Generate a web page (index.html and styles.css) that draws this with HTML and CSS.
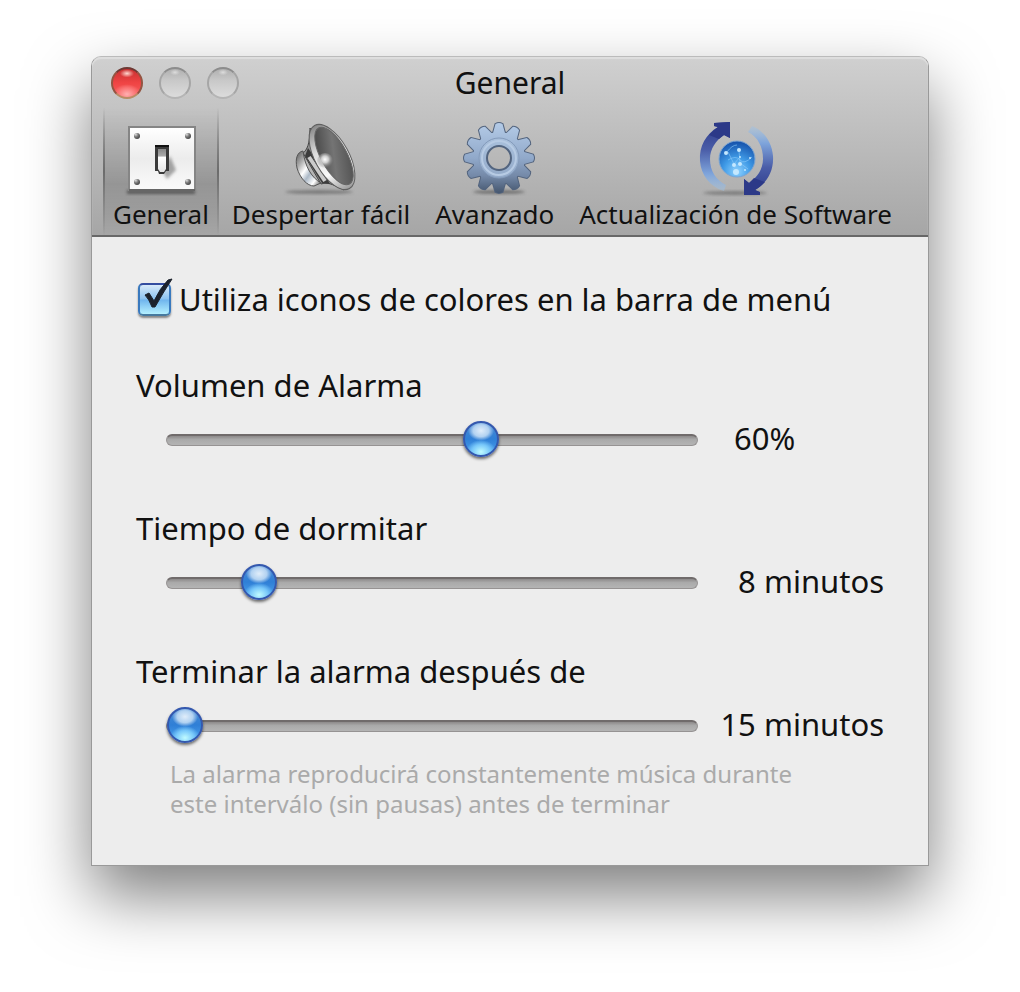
FILE: index.html
```html
<!DOCTYPE html>
<html lang="es">
<head>
<meta charset="utf-8">
<title>General</title>
<link rel="stylesheet" href="styles.css">
</head>
<body>
<main class="window">
  <header class="chrome">
    <div class="titlebar">
      <div class="lights">
        <button class="light light-close" aria-label="Cerrar"></button>
        <button class="light" aria-label="Minimizar"></button>
        <button class="light" aria-label="Ampliar"></button>
      </div>
      <h1 class="title">General</h1>
    </div>
    <nav class="toolbar">
      <button class="tool tool-active" aria-current="page">
        <svg class="tool-icon" viewBox="0 0 76 76" aria-hidden="true">
          <defs>
            <linearGradient id="plate" x1="0" y1="0" x2="0" y2="1"><stop offset="0" stop-color="#fff"/><stop offset=".5" stop-color="#ececec"/><stop offset="1" stop-color="#fafafa"/></linearGradient>
            <linearGradient id="lever" x1="0" y1="0" x2="0" y2="1"><stop offset="0" stop-color="#888"/><stop offset=".3" stop-color="#aaa"/><stop offset=".36" stop-color="#fff"/><stop offset="1" stop-color="#e4e4e4"/></linearGradient>
            <radialGradient id="screw" cx=".3" cy=".25" r=".8"><stop offset="0" stop-color="#ddd"/><stop offset=".5" stop-color="#777"/><stop offset="1" stop-color="#444"/></radialGradient>
            <filter id="soft" x="-50%" y="-50%" width="200%" height="200%"><feGaussianBlur stdDeviation="1.5"/></filter>
          </defs>
          <path d="M4 70h68v4H4z" fill="#333" opacity=".6" filter="url(#soft)"/>
          <rect x="5" y="6" width="68" height="65" fill="#858585"/>
          <rect x="7" y="8" width="64" height="61" fill="url(#plate)"/>
          <path d="M6 70h66" stroke="#666" stroke-width="2"/>
          <circle cx="14" cy="16" r="3" fill="url(#screw)"/><circle cx="65" cy="16" r="3" fill="url(#screw)"/>
          <circle cx="14" cy="62" r="3" fill="url(#screw)"/><circle cx="65" cy="62" r="3" fill="url(#screw)"/>
          <path d="M40 52L47 36L53 50L44 59z" fill="#555" opacity=".5" filter="url(#soft)"/>
          <path d="M32 25h14v26h-3l-2 3h-5l-1-3h-3z" fill="#3a3a3a"/>
          <path d="M32 26h14" stroke="#111" stroke-width="2"/>
          <path d="M35 29h8v20l-2 3h-4l-2-3z" fill="url(#lever)"/>
        </svg>
        <span class="tool-label">General</span>
      </button>
      <button class="tool">
        <svg class="tool-icon" viewBox="0 0 76 76" aria-hidden="true">
          <defs>
            <linearGradient id="cone" x1="0" y1="0" x2="1" y2="1"><stop offset="0" stop-color="#3a3a3a"/><stop offset=".5" stop-color="#747474"/><stop offset="1" stop-color="#484848"/></linearGradient>
            <linearGradient id="rim" x1="0" y1="0" x2="0" y2="1"><stop offset="0" stop-color="#888"/><stop offset=".35" stop-color="#ddd"/><stop offset=".7" stop-color="#fafafa"/><stop offset="1" stop-color="#999"/></linearGradient>
            <linearGradient id="magnet" x1="0" y1="0" x2="1" y2="1"><stop offset="0" stop-color="#555"/><stop offset=".25" stop-color="#aaa"/><stop offset=".45" stop-color="#fff"/><stop offset=".6" stop-color="#acb9c7"/><stop offset=".8" stop-color="#fff"/><stop offset="1" stop-color="#444"/></linearGradient>
            <radialGradient id="dome" cx=".5" cy=".4" r=".55"><stop offset="0" stop-color="#fff"/><stop offset=".4" stop-color="#ccc"/><stop offset="1" stop-color="#777" stop-opacity="0"/></radialGradient>
          </defs>
          <ellipse cx="36" cy="72" rx="34" ry="2" fill="#444" opacity=".5" filter="url(#soft)"/>
          <path d="M27 8C27 24 24 30 20 33L38 64C46 61 54 67 61 70z" fill="#929292" stroke="#444"/>
          <path d="M25 28L22 36L39 63L47 64L38 46z" fill="#3c3c3c"/>
          <path d="M26 37L42 61" stroke="#ccc" stroke-width="4"/>
          <path d="M20 31C14 32 12 39 14 48C17 58 24 66 31 66L38 63C29 58 22 47 20 31z" fill="url(#magnet)" stroke="#555"/>
          <ellipse cx="49" cy="37" rx="17" ry="36" transform="rotate(-29 49 37)" fill="url(#rim)" stroke="#606060"/>
          <ellipse cx="51" cy="36" rx="13" ry="32" transform="rotate(-29 51 36)" fill="url(#cone)" stroke="#666"/>
          <circle cx="42" cy="41" r="8" fill="url(#dome)"/>
        </svg>
        <span class="tool-label">Despertar fácil</span>
      </button>
      <button class="tool">
        <svg class="tool-icon" viewBox="0 0 76 76" aria-hidden="true">
          <defs>
            <linearGradient id="steel" gradientUnits="userSpaceOnUse" x1="0" y1="2" x2="0" y2="74"><stop offset="0" stop-color="#b5cce8"/><stop offset=".5" stop-color="#91a9ca"/><stop offset=".75" stop-color="#7489a8"/><stop offset="1" stop-color="#42536b"/></linearGradient>
            <linearGradient id="ring" x1="0" y1="0" x2="0" y2="1"><stop offset="0" stop-color="#a9c0dc"/><stop offset="1" stop-color="#93aac9"/></linearGradient>
            <mask id="hub"><path d="M0 0h80v80H0z" fill="#fff"/><circle cx="42" cy="38" r="12" fill="#000"/></mask>
            <path id="tooth" d="M36 13L38.500 4Q42 2 45.500 4L48 13z"/>
            <g id="gear">
              <circle cx="42" cy="38" r="26"/>
              <use href="#tooth"/><use href="#tooth" transform="rotate(30 42 38)"/><use href="#tooth" transform="rotate(60 42 38)"/><use href="#tooth" transform="rotate(90 42 38)"/><use href="#tooth" transform="rotate(120 42 38)"/><use href="#tooth" transform="rotate(150 42 38)"/><use href="#tooth" transform="rotate(180 42 38)"/><use href="#tooth" transform="rotate(210 42 38)"/><use href="#tooth" transform="rotate(240 42 38)"/><use href="#tooth" transform="rotate(270 42 38)"/><use href="#tooth" transform="rotate(300 42 38)"/><use href="#tooth" transform="rotate(330 42 38)"/>
            </g>
            <clipPath id="gearclip"><circle cx="42" cy="38" r="26"/><use href="#tooth"/><use href="#tooth" transform="rotate(30 42 38)"/><use href="#tooth" transform="rotate(60 42 38)"/><use href="#tooth" transform="rotate(90 42 38)"/><use href="#tooth" transform="rotate(120 42 38)"/><use href="#tooth" transform="rotate(150 42 38)"/><use href="#tooth" transform="rotate(180 42 38)"/><use href="#tooth" transform="rotate(210 42 38)"/><use href="#tooth" transform="rotate(240 42 38)"/><use href="#tooth" transform="rotate(270 42 38)"/><use href="#tooth" transform="rotate(300 42 38)"/><use href="#tooth" transform="rotate(330 42 38)"/></clipPath>
          </defs>
          <ellipse cx="42" cy="72" rx="26" ry="2" fill="#333" opacity=".5" filter="url(#soft)"/>
          <g mask="url(#hub)">
            <use href="#gear" fill="#53647e" stroke="#53647e" stroke-width="2"/>
            <path d="M0 0h80v76H0z" fill="url(#steel)" clip-path="url(#gearclip)"/>
            <circle cx="42" cy="38" r="20" fill="url(#ring)" stroke="#849bbb"/>
            <circle cx="42" cy="38" r="17" fill="none" stroke="#b7cbe4" stroke-width="2"/>
          </g>
          <circle cx="42" cy="38" r="12" fill="none" stroke="#52647f" stroke-width="2"/>
        </svg>
        <span class="tool-label">Avanzado</span>
      </button>
      <button class="tool">
        <svg class="tool-icon" viewBox="0 0 76 76" aria-hidden="true">
          <defs>
            <radialGradient id="globe" cx=".5" cy=".85" r=".85"><stop offset="0" stop-color="#8ed2ff"/><stop offset=".45" stop-color="#3f9ae6"/><stop offset="1" stop-color="#144fa9"/></radialGradient>
            <linearGradient id="up" x1="0" y1="0" x2="0" y2="1"><stop offset="0" stop-color="#2b3888"/><stop offset=".4" stop-color="#4a5da8"/><stop offset=".75" stop-color="#7ea4db"/><stop offset="1" stop-color="#9dc3e8" stop-opacity=".4"/></linearGradient>
            <linearGradient id="down" x1="0" y1="1" x2="0" y2="0"><stop offset="0" stop-color="#2b3888"/><stop offset=".4" stop-color="#4a5da8"/><stop offset=".75" stop-color="#7ea4db"/><stop offset="1" stop-color="#9dc3e8" stop-opacity=".4"/></linearGradient>
          </defs>
          <ellipse cx="37" cy="73" rx="32" ry="2" fill="#333" opacity=".4" filter="url(#soft)"/>
          <path d="M16 3V6L20 7C8 14 1 26 2 41C3 55 12 67 26 71L28 65C18 60 12 51 12 39C12 29 18 20 26 15L32 18V2z" fill="url(#up)"/>
          <path d="M16 3V6L20 7C17 9 14 12 11 15L21 19L26 15L32 18V2z" fill="#2c3988"/>
          <path d="M61 75V72L57 70C69 63 76 51 75 36C74 22 65 10 54 6L50 12C60 17 65 27 65 39C65 49 59 58 51 63L46 59V75z" fill="url(#down)"/>
          <path d="M62 75V72L57 70C61 68 64 65 67 62L56 58L51 63L46 59V75z" fill="#2c3988"/>
          <circle cx="39" cy="39" r="18" fill="url(#globe)" stroke="#7da5d2"/>
          <path d="M29 32q5-7 10-7M30 40q8-5 12 0t12-3M35 49l7-6 8 6M41 31l1 12M30 32l6 12M41 38l-5 6" fill="none" stroke="#8ccbfa" stroke-width="1" opacity=".6"/>
          <g fill="#c4e8ff"><circle cx="28" cy="33" r="2"/><circle cx="41" cy="30" r="2"/><circle cx="42" cy="37" r="1"/><circle cx="36" cy="45" r="2"/><circle cx="42" cy="44" r="2"/><circle cx="38" cy="52" r="3"/><circle cx="52" cy="38" r="1"/><circle cx="47" cy="50" r="1"/></g>
        </svg>
        <span class="tool-label">Actualización de Software</span>
      </button>
    </nav>
  </header>

  <form class="content">
    <label class="check">
      <span class="check-box">
        <input class="check-input" type="checkbox" checked>
        <svg class="check-mark" viewBox="0 0 36 40" aria-hidden="true"><path d="M8 16L12 14L17 22Q23 9 31 1L35 0Q27 12 18 28H15Q12 20 8 16z"/></svg>
      </span>
      <span>Utiliza iconos de colores en la barra de menú</span>
    </label>

    <div class="setting">
      <label class="setting-label" for="volume">Volumen de Alarma</label>
      <div class="setting-row">
        <input class="slider" id="volume" type="range" min="0" max="100" value="60">
        <output class="value value-start" for="volume">60%</output>
      </div>
    </div>
    <div class="setting">
      <label class="setting-label" for="snooze">Tiempo de dormitar</label>
      <div class="setting-row">
        <input class="slider" id="snooze" type="range" min="5" max="25" value="8">
        <output class="value" for="snooze">8 minutos</output>
      </div>
    </div>
    <div class="setting">
      <label class="setting-label" for="stop">Terminar la alarma después de</label>
      <div class="setting-row">
        <input class="slider" id="stop" type="range" min="15" max="120" value="15" aria-describedby="hint">
        <output class="value" for="stop">15 minutos</output>
      </div>
      <p class="hint" id="hint">La alarma reproducirá constantemente música durante<br>este interválo (sin pausas) antes de terminar</p>
    </div>
  </form>
</main>
</body>
</html>
```

FILE: styles.css
```css
* { box-sizing: border-box; }

body {
  min-height: 100vh;
  margin: 0;
  padding: 56px 91px;
  background: #fff;
  color: #111;
  font-family: "Noto Sans", "Open Sans", sans-serif;
  font-size: 31px;
  line-height: 40px;
}

.window {
  border: 1px solid #999;
  border-top-color: #bbb;
  border-radius: 10px 10px 0 0;
  background: #ededed;
  box-shadow: 0 30px 64px rgba(0, 0, 0, .5);
}

.chrome {
  border-bottom: 2px solid #686868;
  border-radius: 9px 9px 0 0;
  background: linear-gradient(#d0d0d0, #a6a6a6);
  box-shadow: inset 0 2px 1px #dedede;
}

.titlebar {
  display: grid;
  grid-template-columns: 1fr auto 1fr;
  align-items: center;
  height: 51px;
  padding: 0 19px;
}

.lights { display: flex; gap: 16px; }

.light {
  width: 32px;
  height: 32px;
  padding: 0;
  border: 2px solid #999;
  border-color: #8c8c8c #a6a6a6 #b5b5b5;
  border-radius: 50%;
  background: radial-gradient(ellipse 5px 3px at 50% 12%, #ddd, transparent), linear-gradient(#b0b0b0, #c8c8c8 40%, #dcdcdc);
}

.light-close {
  border-color: #6d3934 #935542 #b98c65;
  background:
    radial-gradient(ellipse 7px 4px at 50% 16%, #ffd8d0, transparent),
    radial-gradient(ellipse 14px 10px at 50% 90%, #ffb0b0, #fb7777 60%, transparent),
    linear-gradient(#c73232, #f04444 50%, #f76060);
}

.title { margin: 0; font-size: 30px; font-weight: 400; }

.toolbar { display: flex; gap: 1px; padding: 0 11px; }

.tool {
  display: flex;
  flex-direction: column;
  align-items: center;
  gap: 3px;
  padding: 12px 12px 6px;
  border: 0;
  background: none;
  color: inherit;
  font: inherit;
  font-size: 26px;
  line-height: 30px;
  white-space: nowrap;
}

.tool-active {
  border: solid transparent;
  border-width: 0 2px;
  border-image: linear-gradient(transparent, #6c6c6c 50%, #8c8c8c 80%, transparent) 1;
  padding: 12px 8px 6px;
  background: linear-gradient(transparent, rgba(0, 0, 0, .16) 60%, rgba(0, 0, 0, .08) 85%, transparent);
}

.tool-icon { width: 76px; height: 76px; overflow: visible; }

.content { padding: 42px 44px 46px; }

.check { display: flex; align-items: center; gap: 6px; white-space: nowrap; }

.check-box { position: relative; display: flex; width: 37px; }

.check-input {
  appearance: none;
  width: 33px;
  height: 33px;
  margin: 0 2px;
  border: 2px solid #4579b8;
  border-color: #344da0 #3979be #477a9f;
  border-radius: 5px;
  background: linear-gradient(#d8eafa, #8cc3f0 48%, #70b5ed 52%, #b4f0ff);
  box-shadow: 0 2px 2px #888;
}

.check-mark {
  position: absolute;
  left: 1px;
  bottom: -3px;
  width: 36px;
  height: 40px;
  overflow: visible;
  fill: #1c222c;
  stroke: #1c222c;
  pointer-events: none;
}

.setting { margin-top: 50px; }
.check + .setting { margin-top: 46px; }
.setting-label { display: block; }

.setting-row {
  display: flex;
  align-items: center;
  height: 36px;
  margin-top: 17px;
  padding-left: 30px;
}

.slider {
  appearance: none;
  flex: 1;
  min-width: 0;
  height: 36px;
  margin: 0;
  background: none;
}

.slider::-webkit-slider-runnable-track {
  height: 12px;
  border: 1px solid #969393;
  border-top: 2px solid #706b6b;
  border-radius: 6px;
  background: linear-gradient(#8d8a8a, #aaa 40%, #b4b4b4);
}

.slider::-webkit-slider-thumb {
  appearance: none;
  width: 36px;
  height: 36px;
  margin-top: -15px;
  border: 2px solid #3458ae;
  border-radius: 50%;
  background:
    radial-gradient(ellipse 13px 10px at 50% 24%, #e0edfa, #b2d2f1 60%, transparent),
    radial-gradient(ellipse 15px 12px at 50% 90%, #c0fbff, #78c8fa 60%, transparent),
    linear-gradient(#4b8bd4, #2f7fd6 50%, #4da3ee);
  box-shadow: 0 2px 3px rgba(0, 0, 0, .55);
}

.value {
  width: 186px;
  padding-bottom: 4px;
  line-height: 36px;
  text-align: right;
  white-space: nowrap;
}
.value-start { padding-left: 36px; text-align: left; }

.hint {
  margin: 15px 0 0;
  padding-left: 34px;
  color: #aaa;
  font-size: 24px;
  line-height: 30px;
}
```
